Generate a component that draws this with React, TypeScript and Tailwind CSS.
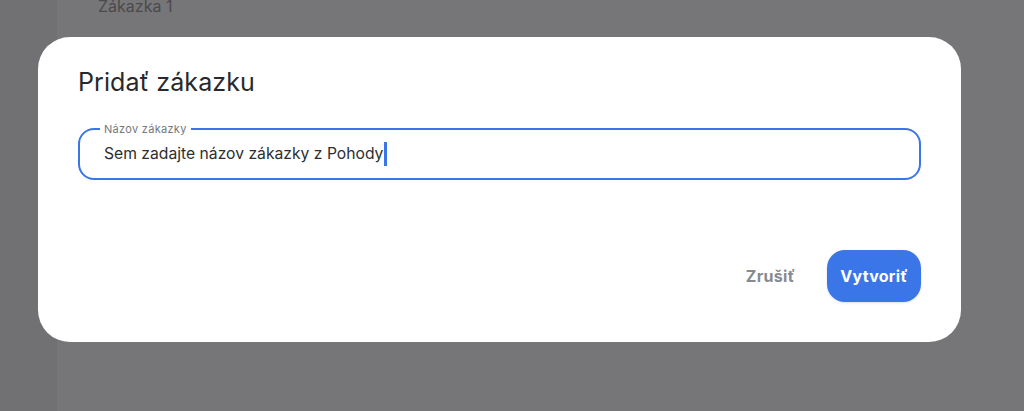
export default function App() {
  return (
    <div className="relative h-[411px] w-[1024px] overflow-hidden font-['Inter','Noto_Sans',sans-serif]">
      {/* stránka pod dialógom */}
      <div className="flex h-full">
        <div className="w-[57px] bg-[#717174]" />
        <div className="flex-1 bg-[#767678] pl-[41px]">
          <p className="-mt-[6px] text-[16px] text-[#4a4a4d]">Zákazka 1</p>
        </div>
      </div>

      {/* dialóg */}
      <div className="absolute inset-0 pl-[38px] pt-[37px]">
        <div className="flex h-[305px] w-[923px] flex-col rounded-[32px] bg-white px-10 pb-10 pt-[29px]">
          <h2 className="text-[25px] leading-8 tracking-[0.1px] text-[#28292c]">Pridať zákazku</h2>

          <div className="relative mt-[30px] flex h-[52px] items-center rounded-[16px] border-2 border-[#3b76e8] pl-[24px]">
            <span className="absolute -top-[8px] left-[20px] bg-white px-1 text-[11px] leading-[14px] tracking-[0.3px] text-[#74777c]">
              Názov zákazky
            </span>
            <span className="text-[15.7px] text-[#2d2e31]">Sem zadajte názov zákazky z Pohody</span>
            <span className="ml-[1px] h-[24px] w-[3px] bg-[#3b76e8]" />
          </div>

          <div className="mt-auto flex items-center justify-end gap-4">
            <button className="h-[52px] px-4 text-[16px] font-bold tracking-[0.3px] text-[#868a91]">Zrušiť</button>
            <button className="h-[52px] w-[94px] rounded-[18px] bg-[#3b76e8] text-[16px] font-bold tracking-[0.3px] text-white shadow-sm">
              Vytvoriť
            </button>
          </div>
        </div>
      </div>
    </div>
  );
}
